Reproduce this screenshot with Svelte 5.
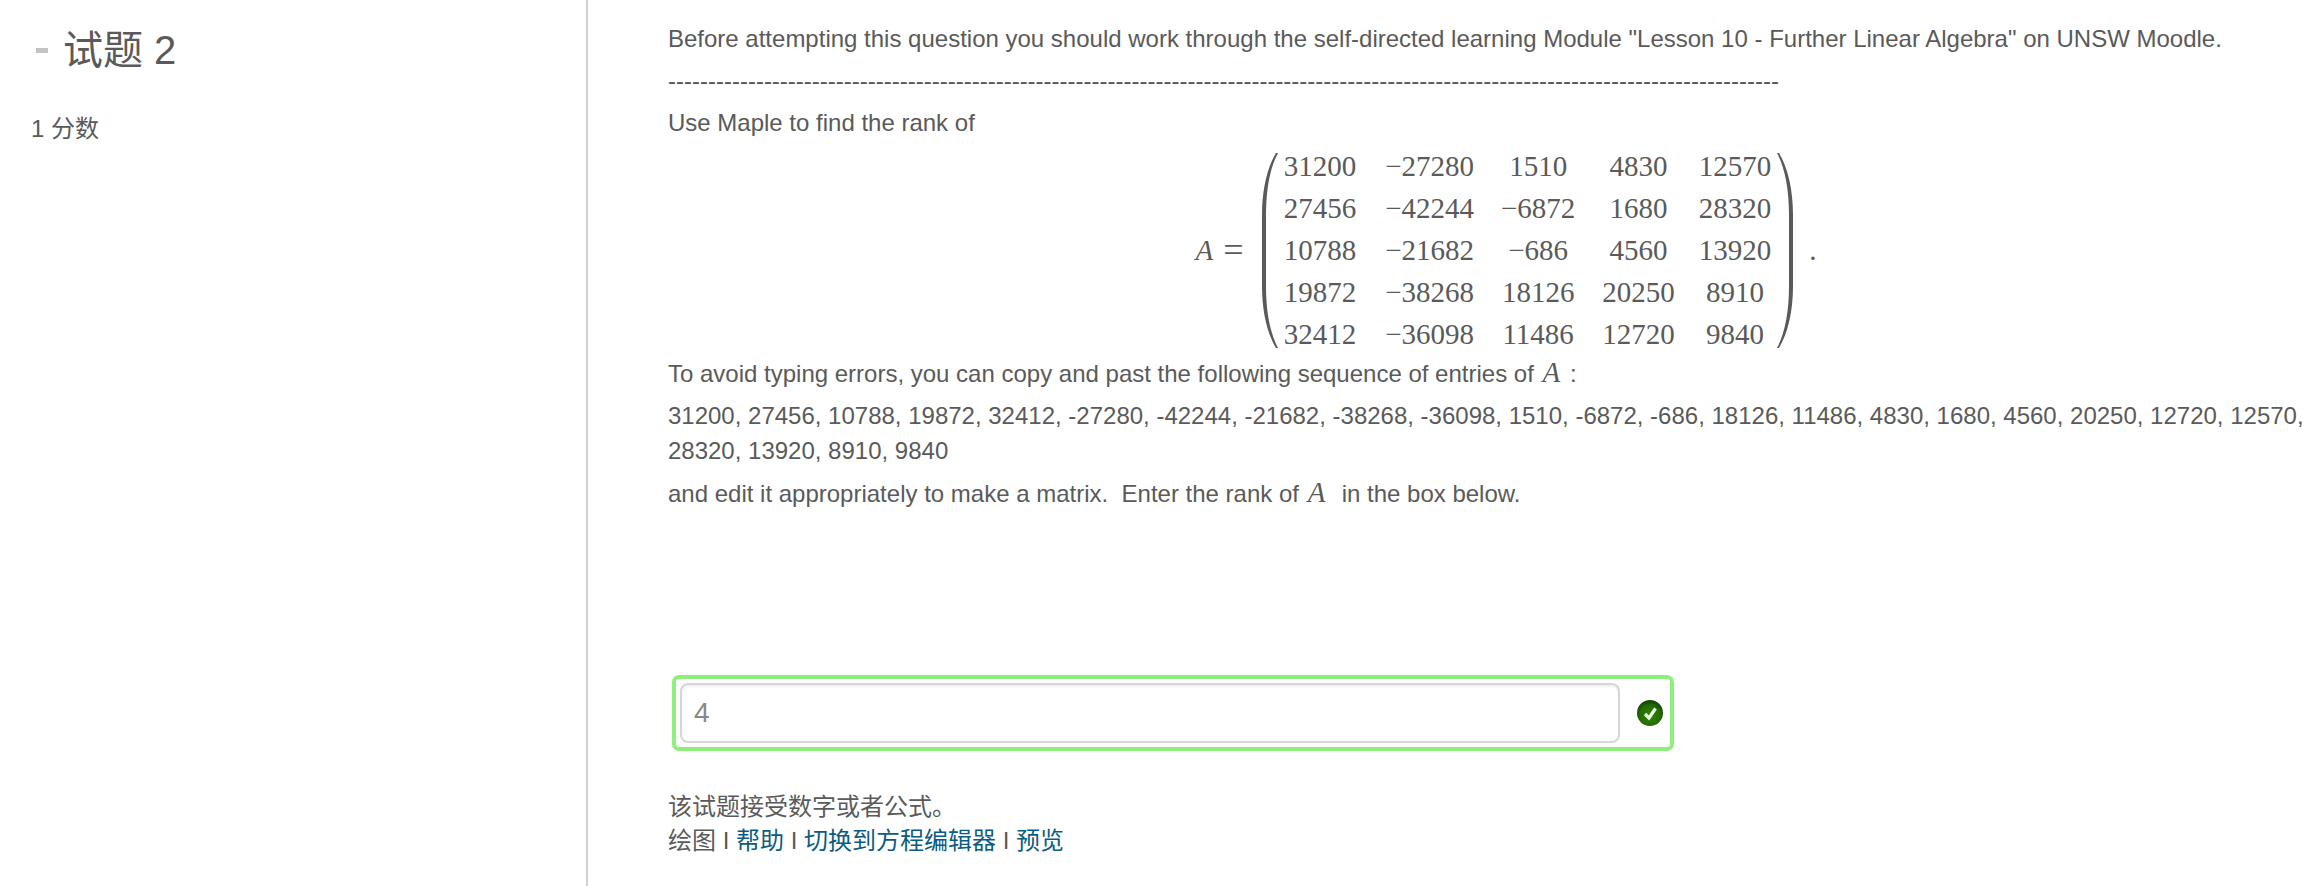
<script>
  const matrix = [
    [31200, -27280, 1510, 4830, 12570],
    [27456, -42244, -6872, 1680, 28320],
    [10788, -21682, -686, 4560, 13920],
    [19872, -38268, 18126, 20250, 8910],
    [32412, -36098, 11486, 12720, 9840],
  ];
  // Entries listed column by column
  const sequence = matrix[0].flatMap((_, c) => matrix.map((row) => row[c])).join(', ');
  const rule = '-'.repeat(139);
  const format = (n) => (n < 0 ? '\u2212' + -n : String(n));
  let answer = $state('4');
</script>

<main class="question">
  <aside class="summary">
    <h2><span class="toggle" aria-hidden="true"></span>试题 2</h2>
    <p class="points">1 分数</p>
  </aside>

  <section class="content">
    <div class="prompt">
      <p>Before attempting this question you should work through the self-directed learning Module "Lesson 10 - Further Linear Algebra" on UNSW Moodle.</p>
      <p class="rule">{rule}</p>
      <p>Use Maple to find the rank of</p>

      <div class="equation">
        <span class="lhs"><i>A</i><span class="equals">=</span></span>
        <svg class="paren" viewBox="0 0 16 195" aria-hidden="true">
          <path d="M14 0H16C8 15 4 36 4 62V133C4 159 8 180 16 195H14C5 180 0 158 0 133V62C0 37 5 15 14 0Z" />
        </svg>
        <table>
          <tbody>
            {#each matrix as row}
              <tr>
                {#each row as value}<td>{format(value)}</td>{/each}
              </tr>
            {/each}
          </tbody>
        </table>
        <svg class="paren" viewBox="0 0 16 195" aria-hidden="true">
          <path d="M2 0H0C8 15 12 36 12 62V133C12 159 8 180 0 195H2C11 180 16 158 16 133V62C16 37 11 15 2 0Z" />
        </svg>
        <span class="stop">.</span>
      </div>

      <p>To avoid typing errors, you can copy and past the following sequence of entries of <i>A</i> :</p>
      <p>{sequence}</p>
      <p>and edit it appropriately to make a matrix.&nbsp; Enter the rank of <i>A</i>&nbsp; in the box below.</p>
    </div>

    <div class="answer">
      <input type="text" aria-label="Rank of A" bind:value={answer} />
      <svg class="correct" viewBox="0 0 26 26" role="img" aria-label="Correct">
        <defs>
          <radialGradient id="ball" cx="50%" cy="60%" r="55%">
            <stop offset="0" stop-color="#2f8500" />
            <stop offset="0.7" stop-color="#256c00" />
            <stop offset="1" stop-color="#174a05" />
          </radialGradient>
        </defs>
        <circle cx="13" cy="13" r="13" fill="url(#ball)" />
        <path d="M8 14L12 18L18.500 8.500" fill="none" stroke="#f0f8ec" stroke-width="3.200" />
      </svg>
    </div>

    <div class="notes">
      <p>该试题接受数字或者公式。</p>
      <p>绘图 I <a href="#help">帮助</a> I <a href="#editor">切换到方程编辑器</a> I <a href="#preview">预览</a></p>
    </div>
  </section>
</main>

<style>
  :global(body) {
    margin: 0;
    background: #fff;
  }

  .question {
    display: grid;
    grid-template-columns: 253fr 747fr;
    min-height: 100vh;
    color: #5a5a5a;
    font: 24px/35px "Liberation Sans", "Noto Sans CJK SC", sans-serif;
  }

  p,
  h2 {
    margin: 0;
  }

  .summary {
    padding: 24px 31px;
    border-right: 2px solid #d0d0d0;
  }

  h2 {
    display: flex;
    align-items: center;
    gap: 15px;
    padding-left: 5px;
    font-size: 40px;
    font-weight: 400;
    line-height: 52px;
  }

  .toggle {
    width: 12px;
    height: 5px;
    background: #c3c3c3;
  }

  .points {
    margin-top: 35px;
  }

  .content {
    padding: 21px 16px 24px 80px;
    min-width: 0;
  }

  .prompt p {
    margin-bottom: 7px;
  }

  .rule {
    white-space: nowrap;
  }

  i,
  .equation {
    font-family: "Liberation Serif", serif;
    font-size: 29px;
  }

  p i {
    padding: 0 3px 0 2px;
  }

  .equation {
    display: flex;
    align-items: center;
    justify-content: center;
    margin: 11px 0 6px;
    padding-left: 36px;
  }

  .lhs {
    display: flex;
    gap: 10px;
    margin-right: 18px;
  }

  .equals {
    font-size: 36px;
  }

  .paren {
    width: 16px;
    height: 195px;
    fill: #5a5a5a;
  }

  table {
    margin: -6px -6px;
    border-collapse: collapse;
    table-layout: fixed;
  }

  td {
    box-sizing: border-box;
    width: 96px;
    height: 42px;
    padding: 0 12px;
    text-align: center;
  }

  td:nth-child(2) {
    width: 118px;
    text-align: right;
  }

  td:nth-child(3) {
    width: 104px;
  }

  .stop {
    margin-left: 16px;
  }

  .answer {
    display: flex;
    align-items: center;
    box-sizing: border-box;
    max-width: 1002px;
    margin: 164px 0 0 4px;
    padding: 4px 7px 4px 4px;
    border: 4px solid #8cf07b;
    border-radius: 7px;
  }

  input {
    flex: 1;
    box-sizing: border-box;
    min-width: 0;
    height: 60px;
    margin-right: 17px;
    padding: 0 12px;
    border: 2px solid #d6d6d6;
    border-radius: 8px;
    box-shadow: inset 0 2px 2px #f0f0f0;
    color: #888;
    font: inherit;
    font-size: 28px;
    outline: none;
  }

  .correct {
    width: 26px;
    height: 26px;
  }

  .notes {
    margin-top: 39px;
    line-height: 34px;
  }

  a {
    color: #0b5c82;
    text-decoration: none;
  }
</style>
